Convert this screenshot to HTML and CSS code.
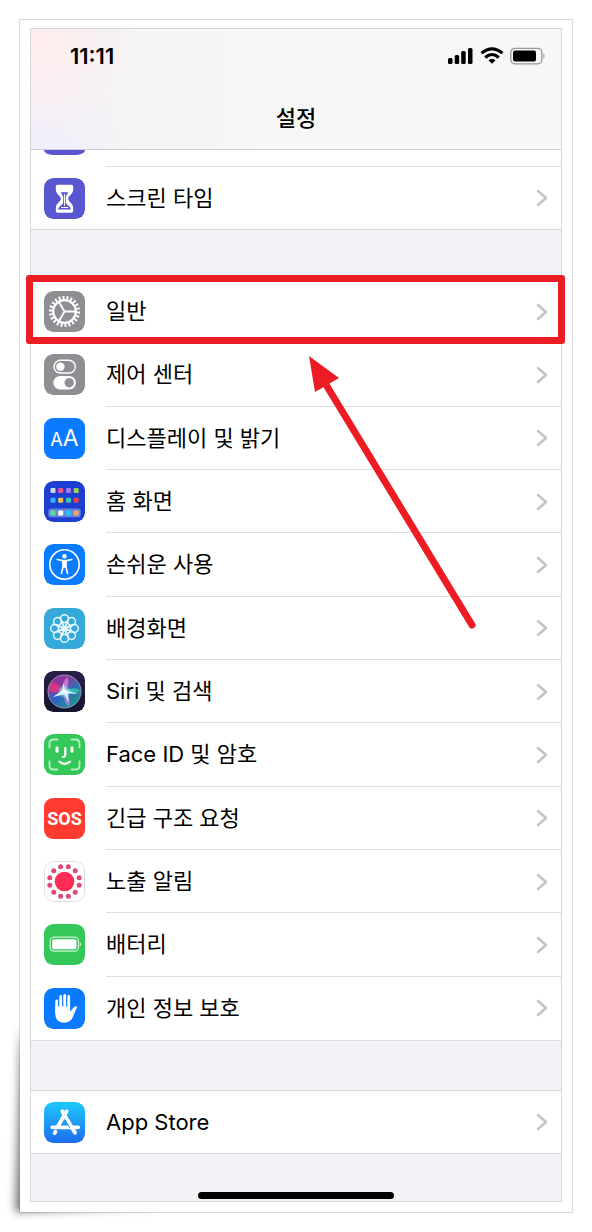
FILE: index.html
```html
<!DOCTYPE html>
<html lang="ko">
<head>
<meta charset="utf-8">
<meta name="viewport" content="width=device-width, initial-scale=1">
<title>설정</title>
<link rel="stylesheet" href="styles.css">
</head>
<body>
<svg class="defs" aria-hidden="true">
  <defs>
    <symbol id="chevron" viewBox="0 0 12 18"><path d="M2 2l8 7-8 7" fill="none" stroke="#c4c4c6" stroke-width="2.5" stroke-linecap="round" stroke-linejoin="round"/></symbol>
    <g id="petal"><circle cx="20.500" cy="10.600" r="3.900"/><path d="M17 12.500q.5 3.500 3.500 6.500 3-3 3.500-6.500"/></g>
  </defs>
</svg>
<main class="card">
  <svg class="curl" viewBox="0 0 230 240" aria-hidden="true"><defs><linearGradient id="curl-fade" x1="0" y1="1" x2="1" y2="0"><stop offset="0" stop-color="#777"/><stop offset=".6" stop-color="#999"/><stop offset="1" stop-color="#bbb" stop-opacity=".4"/></linearGradient></defs><polygon points="34,30 29,214 170,209 60,150" fill="url(#curl-fade)"/></svg>
  <div class="screen">
    <header class="header">
      <div class="status">
        <time class="clock">11:11</time>
        <div class="indicators">
          <svg width="26" height="18" viewBox="0 0 26 18" aria-hidden="true"><rect x="0" y="11" width="4.500" height="6" rx="1.500"/><rect x="6.700" y="8" width="4.500" height="9" rx="1.500"/><rect x="13.200" y="4" width="4.500" height="13" rx="1.500"/><rect x="20" y="1" width="4.500" height="16" rx="1.500"/></svg>
          <svg width="24" height="18" viewBox="0 0 24 18" fill="none" stroke="#000" stroke-width="3" aria-hidden="true"><path d="M1.500 6.200Q12-2.500 22.500 6.200"/><path d="M5.200 10.500Q12 4.600 18.800 10.500"/><path d="M8.500 13.300q3.500-2.800 7 0L12 16.800z" fill="#000" stroke="none"/></svg>
          <svg width="36" height="18" viewBox="0 0 36 18" aria-hidden="true"><rect x=".8" y="1.300" width="31" height="15.500" rx="4" fill="none" stroke="#999" stroke-width="1.300"/><rect x="3" y="3.500" width="23" height="11" rx="2"/><path d="M33.300 6.500q2.700 2.500 0 5z" fill="#999"/></svg>
        </div>
      </div>
      <h1 class="title">설정</h1>
    </header>

    <ul class="group group-scrolled">
      <li class="row row-cut"><span class="tile tile-cut"></span><span class="label"></span></li>
      <li class="row"><a class="link" href="#screen-time">
        <svg class="tile" viewBox="0 0 41 41" aria-hidden="true"><rect width="41" height="41" rx="9" fill="#5856d0"/><path d="M13.500 6.800h14q1.700 0 1.700 1.700v3c0 5-5 6-5 9.200s5 4.300 5 9.300v3q0 1.700-1.700 1.700h-14q-1.700 0-1.700-1.700v-3c0-5 5-6.100 5-9.300s-5-4.200-5-9.200v-3q0-1.700 1.700-1.700z" fill="#fff"/><path d="M16.700 14.300h7.600c-.8 2-2.200 3.200-2.500 4.400v5.800c.4 2.500 4.800 3.500 5 7H14.200c.2-3.500 4.600-4.500 5-7v-5.800c-.3-1.200-1.700-2.400-2.500-4.400z" fill="#5856d0"/><path d="M20.500 16v12M17 29.500h7" stroke="#fff" stroke-width="1"/></svg>
        <span class="label">스크린 타임</span><svg class="chevron" aria-hidden="true"><use href="#chevron"/></svg></a></li>
    </ul>

    <ul class="group group-main">
      <li class="row row-marked"><a class="link" href="#general">
        <svg class="tile" viewBox="0 0 41 41" aria-hidden="true"><rect width="41" height="41" rx="9" fill="#8e8e93"/><g fill="none" stroke="#fff"><circle cx="20.500" cy="20.500" r="11.300" stroke-width="2.200"/><circle cx="20.500" cy="20.500" r="13.800" stroke-width="3.600" pathLength="44" stroke-dasharray="1 1"/><path d="M20.500 20.500h11M20.500 20.500l-5.500-9.500M20.500 20.500L15 30" stroke-width="1.800"/></g></svg>
        <span class="label">일반</span><svg class="chevron" aria-hidden="true"><use href="#chevron"/></svg></a></li>
      <li class="row"><a class="link" href="#control-center">
        <svg class="tile" viewBox="0 0 41 41" aria-hidden="true"><rect width="41" height="41" rx="9" fill="#8e8e93"/><rect x="10" y="6.300" width="21.300" height="12.800" rx="6.400" fill="none" stroke="#fff" stroke-width="1.500"/><circle cx="16.400" cy="12.700" r="4.200" fill="#fff"/><rect x="9.300" y="22" width="22.700" height="13.600" rx="6.800" fill="#fff"/><circle cx="25.200" cy="28.800" r="4.700" fill="#8e8e93"/></svg>
        <span class="label">제어 센터</span><svg class="chevron" aria-hidden="true"><use href="#chevron"/></svg></a></li>
      <li class="row"><a class="link" href="#display">
        <span class="tile tile-blue glyph-aa" aria-hidden="true"><span class="small-a">A</span><span class="large-a">A</span></span>
        <span class="label">디스플레이 및 밝기</span><svg class="chevron" aria-hidden="true"><use href="#chevron"/></svg></a></li>
      <li class="row"><a class="link" href="#home-screen">
        <svg class="tile" viewBox="0 0 41 41" aria-hidden="true"><rect width="41" height="41" rx="9" fill="#1c3fd2"/><rect x="4.300" y="27.500" width="32.400" height="8.700" rx="2.500" fill="#6683e2"/><g><rect x="6.500" y="7" width="5" height="5" rx="1" fill="#d0d6f2"/><rect x="14.200" y="7" width="5" height="5" rx="1" fill="#ef568f"/><rect x="22" y="7" width="5" height="5" rx="1" fill="#a875ff"/><rect x="29.700" y="7" width="5" height="5" rx="1" fill="#a0cf55"/><rect x="6.500" y="16.800" width="5" height="5" rx="1" fill="#2fb0ff"/><rect x="14.200" y="16.800" width="5" height="5" rx="1" fill="#efc252"/><rect x="22" y="16.800" width="5" height="5" rx="1" fill="#35c8aa"/><rect x="29.700" y="16.800" width="5" height="5" rx="1" fill="#e84353"/><rect x="6.500" y="29.400" width="5" height="5" rx="1" fill="#55e38f"/><rect x="14.200" y="29.400" width="5" height="5" rx="1" fill="#fff"/><rect x="22" y="29.400" width="5" height="5" rx="1" fill="#2fc2ff"/><rect x="29.700" y="29.400" width="5" height="5" rx="1" fill="#f3a268"/></g></svg>
        <span class="label">홈 화면</span><svg class="chevron" aria-hidden="true"><use href="#chevron"/></svg></a></li>
      <li class="row"><a class="link" href="#accessibility">
        <svg class="tile" viewBox="0 0 41 41" aria-hidden="true"><rect width="41" height="41" rx="9" fill="#0a7aff"/><circle cx="20.500" cy="20.500" r="14.700" fill="none" stroke="#fff" stroke-width="1.600"/><circle cx="20.500" cy="12.300" r="2.200" fill="#fff"/><path d="M13.300 15.500l5 1.200h4.400l5-1.200M20.500 17v6M19 17.500v5.500l-1.600 6.500M22 17.500v5.500l1.600 6.500" fill="none" stroke="#fff" stroke-width="1.700" stroke-linecap="round" stroke-linejoin="round"/></svg>
        <span class="label">손쉬운 사용</span><svg class="chevron" aria-hidden="true"><use href="#chevron"/></svg></a></li>
      <li class="row"><a class="link" href="#wallpaper">
        <svg class="tile" viewBox="0 0 41 41" aria-hidden="true"><rect width="41" height="41" rx="9" fill="#35a9da"/><g fill="none" stroke="#e8f8ff" stroke-width="1.500"><use href="#petal"/><use href="#petal" transform="rotate(45 20.500 20.500)"/><use href="#petal" transform="rotate(90 20.500 20.500)"/><use href="#petal" transform="rotate(135 20.500 20.500)"/><use href="#petal" transform="rotate(180 20.500 20.500)"/><use href="#petal" transform="rotate(225 20.500 20.500)"/><use href="#petal" transform="rotate(270 20.500 20.500)"/><use href="#petal" transform="rotate(315 20.500 20.500)"/></g><circle cx="20.500" cy="20.500" r="2" fill="#e8f8ff"/></svg>
        <span class="label">배경화면</span><svg class="chevron" aria-hidden="true"><use href="#chevron"/></svg></a></li>
      <li class="row"><a class="link" href="#siri">
        <svg class="tile" viewBox="0 0 41 41" aria-hidden="true">
          <defs><linearGradient id="siri-orb" x1=".1" y1="0" x2=".9" y2="1"><stop offset="0" stop-color="#a02a98"/><stop offset=".3" stop-color="#8a3aa0"/><stop offset=".6" stop-color="#2a6fb4"/><stop offset="1" stop-color="#20a083"/></linearGradient><linearGradient id="siri-bg" x1="0" y1="0" x2="0" y2="1"><stop offset="0" stop-color="#29204a"/><stop offset="1" stop-color="#12162c"/></linearGradient><radialGradient id="siri-glow"><stop offset="0" stop-color="#fff"/><stop offset=".3" stop-color="#d8f4ff" stop-opacity=".8"/><stop offset="1" stop-color="#7fe" stop-opacity="0"/></radialGradient></defs>
          <rect width="41" height="41" rx="9" fill="url(#siri-bg)"/><circle cx="20.500" cy="20.500" r="16.500" fill="url(#siri-orb)"/><path d="M5 24l15-4-8 14q-6-4-7-10z" fill="#2c64c8" opacity=".8"/><path d="M20 20Q11 9 7 12q-3 5-2 8 7 2 15 0z" fill="#e5337f" opacity=".8"/><path d="M20 20q-2-9 3-14 4 6-3 14z" fill="#e58be0" opacity=".7"/><path d="M21 20q8-5 15-1-5 6-15 1z" fill="#36cfae" opacity=".75"/><path d="M20 20q7 5 5 16-6-5-5-16z" fill="#b685f5" opacity=".75"/><path d="M9 26l9-6.500 1.500-8 1.500 7.500 13 4-10-.8.500 9-4-8z" fill="#fff" opacity=".9"/><circle cx="20.500" cy="20.500" r="7" fill="url(#siri-glow)"/><circle cx="20.500" cy="20.500" r="16.500" fill="none" stroke="#a5aecb" stroke-width=".8"/></svg>
        <span class="label">Siri 및 검색</span><svg class="chevron" aria-hidden="true"><use href="#chevron"/></svg></a></li>
      <li class="row"><a class="link" href="#face-id">
        <svg class="tile" viewBox="0 0 41 41" aria-hidden="true"><rect width="41" height="41" rx="9" fill="#34c759"/><g fill="none" stroke-linecap="round"><path d="M5.500 13.500V9.500q0-4 4-4h4M27.500 5.500h4q4 0 4 4v4M35.500 27.500v4q0 4-4 4h-4M13.500 35.500h-4q-4 0-4-4v-4" stroke="#b4efbf" stroke-width="1.900"/><path d="M13 13.800v3.400M28 13.800v3.400" stroke="#fff" stroke-width="3"/><path d="M21.300 14v6.500q0 2.500-2.500 2.500M15.500 27.700q5 4.300 10.500 0" stroke="#fff" stroke-width="2.200"/></g></svg>
        <span class="label">Face ID 및 암호</span><svg class="chevron" aria-hidden="true"><use href="#chevron"/></svg></a></li>
      <li class="row"><a class="link" href="#sos">
        <span class="tile tile-red" aria-hidden="true">SOS</span>
        <span class="label">긴급 구조 요청</span><svg class="chevron" aria-hidden="true"><use href="#chevron"/></svg></a></li>
      <li class="row"><a class="link" href="#exposure">
        <svg class="tile" viewBox="0 0 41 41" aria-hidden="true"><rect x=".5" y=".5" width="40" height="40" rx="9" fill="#fff" stroke="#dedee0"/><circle cx="20.500" cy="20.500" r="9.800" fill="#ff2d55"/><circle cx="20.500" cy="20.500" r="15.200" fill="none" stroke="#dc4a78" stroke-width="5" stroke-linecap="round" pathLength="12" stroke-dasharray="0 1" stroke-dashoffset=".5"/></svg>
        <span class="label">노출 알림</span><svg class="chevron" aria-hidden="true"><use href="#chevron"/></svg></a></li>
      <li class="row"><a class="link" href="#battery">
        <svg class="tile" viewBox="0 0 41 41" aria-hidden="true"><rect width="41" height="41" rx="9" fill="#34c759"/><rect x="6.200" y="13.200" width="28.300" height="14" rx="4" fill="none" stroke="#c9f3d2" stroke-width="1.200"/><rect x="8.200" y="15.200" width="24.300" height="10" rx="2" fill="#fff"/><path d="M35.800 17.700q2.600 2.500 0 5z" fill="#c9f3d2"/></svg>
        <span class="label">배터리</span><svg class="chevron" aria-hidden="true"><use href="#chevron"/></svg></a></li>
      <li class="row"><a class="link" href="#privacy">
        <svg class="tile" viewBox="0 0 41 41" aria-hidden="true"><rect width="41" height="41" rx="9" fill="#0a7aff"/><path d="M12.700 13v12M16.700 8.500V22M20.700 7.500V22M24.700 8.500V22" stroke="#fff" stroke-width="2.800" stroke-linecap="round"/><path d="M11.300 18.500h14.800v5.300l4-4.800q1.500-1.300 3.300 0-2 3-3.500 7.500-2.400 8.200-9.700 8.200-8.900 0-8.900-9.500z" fill="#fff"/></svg>
        <span class="label">개인 정보 보호</span><svg class="chevron" aria-hidden="true"><use href="#chevron"/></svg></a></li>
    </ul>
    <svg class="arrow" viewBox="0 0 170 276" aria-hidden="true"><path d="M18 28l147 242" stroke="#ed1c24" stroke-width="7" stroke-linecap="round"/><path d="M2 1l30 22-24 14z" fill="#ed1c24"/></svg>

    <ul class="group">
      <li class="row"><a class="link" href="#app-store">
        <svg class="tile" viewBox="0 0 41 41" aria-hidden="true"><defs><linearGradient id="store-bg" x1="0" y1="0" x2="0" y2="1"><stop offset="0" stop-color="#1dcafa"/><stop offset="1" stop-color="#1d6cf0"/></linearGradient></defs><rect width="41" height="41" rx="9" fill="url(#store-bg)"/><g fill="none" stroke-linecap="round"><path d="M22.700 9.300L13.500 25M8.200 25.300h26M11.500 29.800l-.8 1.300" stroke="#fff" stroke-width="3.800"/><path d="M18.300 9.300L31 30.800" stroke="#fff" stroke-width="3.800"/><path d="M21.500 18.500l4 7" stroke="#2492f5" stroke-width="1"/></g></svg>
        <span class="label">App Store</span><svg class="chevron" aria-hidden="true"><use href="#chevron"/></svg></a></li>
    </ul>
    <footer class="footer"><span class="home-bar"></span></footer>
  </div>
</main>
</body>
</html>
```
FILE: styles.css
```css
* { box-sizing: border-box; }

body {
  margin: 0;
  padding: 19px;
  background: #fff;
  color: #000;
  font-family: Inter, "Noto Sans CJK KR", sans-serif;
}

.defs { position: absolute; width: 0; height: 0; }

.card {
  position: relative;
  isolation: isolate;
  padding: 8px 10px 10px;
  border: 1px solid #dcdcdc;
}
.card::before {
  content: "";
  position: absolute;
  inset: 0;
  z-index: -1;
  background: #fff;
}

.curl {
  position: absolute;
  left: -34px;
  bottom: -26px;
  z-index: -2;
  width: 230px;
  height: 240px;
  filter: blur(4px);
}

.screen {
  position: relative;
  border: 1px solid #d6d6d8;
  background: #f2f2f7;
}

.header {
  height: 121px;
  padding-top: 12px;
  border-bottom: 1px solid #cfcfd1;
  background:
    radial-gradient(circle at 0 10%, #ffecee, #ffecee00 110px),
    radial-gradient(circle at 0 100%, #efeefd, #efeefd00 100px),
    linear-gradient(90deg, #f3f3f3, #f7f7f7 50%);
}

.status {
  display: flex;
  align-items: center;
  justify-content: space-between;
  padding: 0 15px 0 39px;
}
.clock { font-size: 22px; line-height: 30px; font-weight: 600; }
.indicators { display: flex; gap: 6px; }

.title {
  margin: 30px 0 0;
  font-size: 22px;
  line-height: 34px;
  font-weight: 500;
  text-align: center;
}

.group {
  list-style: none;
  display: grid;
  margin: 0;
  padding: 0;
  border-bottom: 1px solid #dadadd;
  background: #fff;
}
.group + .group, .arrow + .group {
  margin-top: 49px;
  border-top: 1px solid #dadadd;
}
.group-main { grid-auto-rows: 1fr; min-height: 762px; }

.row { position: relative; display: flex; min-height: 62px; }
.row-cut { min-height: 17px; padding-left: 13px; gap: 21px; }

.link {
  flex: 1;
  display: flex;
  align-items: center;
  gap: 21px;
  padding-left: 13px;
  color: inherit;
  text-decoration: none;
}

.tile {
  flex: none;
  display: flex;
  width: 41px;
  height: 41px;
  border-radius: 9px;
  color: #fff;
}
.tile-cut {
  height: 5px;
  border-radius: 0 0 9px 9px / 0 0 5px 5px;
  background: #5856d0;
}

.tile-blue { background: #0a7aff; }
.glyph-aa { align-items: baseline; justify-content: center; line-height: 41px; }
.small-a { font-size: 18px; }
.large-a { font-size: 23px; }

.tile-red {
  align-items: center;
  justify-content: center;
  background: #ff3b30;
  font: bold 18px/41px Roboto, sans-serif;
}

.label {
  flex: 1;
  display: flex;
  align-items: center;
  align-self: stretch;
  border-bottom: 1px solid #dedee0;
  font-size: 22px;
  line-height: 34px;
}
.row:last-child .label { border-bottom: 0; }

.chevron {
  position: absolute;
  right: 13px;
  width: 12px;
  height: 18px;
}

.row-marked::after {
  content: "";
  position: absolute;
  inset: -5px -4px -1px -5px;
  border: 7px solid #ed1c24;
  border-radius: 3px;
  pointer-events: none;
}

.arrow {
  position: absolute;
  top: 326px;
  left: 276px;
  width: 170px;
  height: 276px;
  pointer-events: none;
}

.footer {
  display: flex;
  align-items: flex-end;
  justify-content: center;
  height: 47px;
  padding-bottom: 2px;
}
.home-bar { width: 37%; height: 7px; border-radius: 4px; background: #000; }
```
